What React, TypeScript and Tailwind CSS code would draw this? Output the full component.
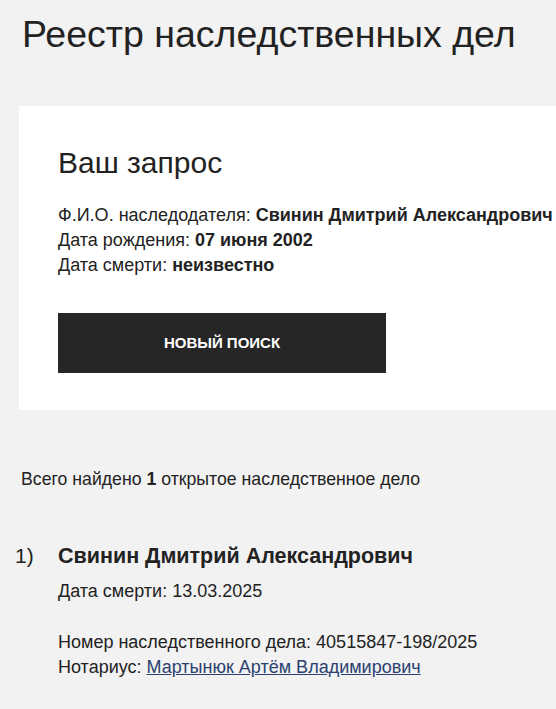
const App = () => {
  return (
    <div className="min-h-screen bg-[#f2f2f2] font-['Liberation_Sans',Arial,sans-serif] text-[#222]">
      <h1 className="pl-[22px] pt-[11px] text-[37.5px] leading-[46px]">Реестр наследственных дел</h1>

      {/* Request card */}
      <section className="ml-[19px] mt-[49px] bg-white pl-[39px] pt-[39px] pb-[37px]">
        <h2 className="text-[30px] leading-[36px]">Ваш запрос</h2>
        <div className="mt-[22px] text-[18px] leading-[25px]">
          <p>
            Ф.И.О. наследодателя: <b>Свинин Дмитрий Александрович</b>
          </p>
          <p>
            Дата рождения: <b>07 июня 2002</b>
          </p>
          <p>
            Дата смерти: <b>неизвестно</b>
          </p>
        </div>
        <button className="mt-[35px] flex h-[60px] w-[328px] items-center justify-center bg-[#262626] text-[15px] font-bold uppercase text-white">
          Новый поиск
        </button>
      </section>

      <p className="mt-[57px] pl-[21px] text-[17.7px] leading-[25px]">
        Всего найдено <b>1</b> открытое наследственное дело
      </p>

      {/* Results */}
      <ol className="mt-[50px] pb-[30px]">
        <li className="flex">
          <span className="w-[58px] shrink-0 pl-[15px] text-[21px] leading-[28px]">1)</span>
          <div>
            <h3 className="text-[21.5px] font-bold leading-[28px]">Свинин Дмитрий Александрович</h3>
            <p className="mt-[9px] text-[18px] leading-[25px]">Дата смерти: 13.03.2025</p>
            <div className="mt-[26px] text-[18px] leading-[25px]">
              <p>Номер наследственного дела: 40515847-198/2025</p>
              <p>
                Нотариус:{" "}
                <a href="#" className="text-[#2b4170] underline">
                  Мартынюк Артём Владимирович
                </a>
              </p>
            </div>
          </div>
        </li>
      </ol>
    </div>
  );
};

export default App;
